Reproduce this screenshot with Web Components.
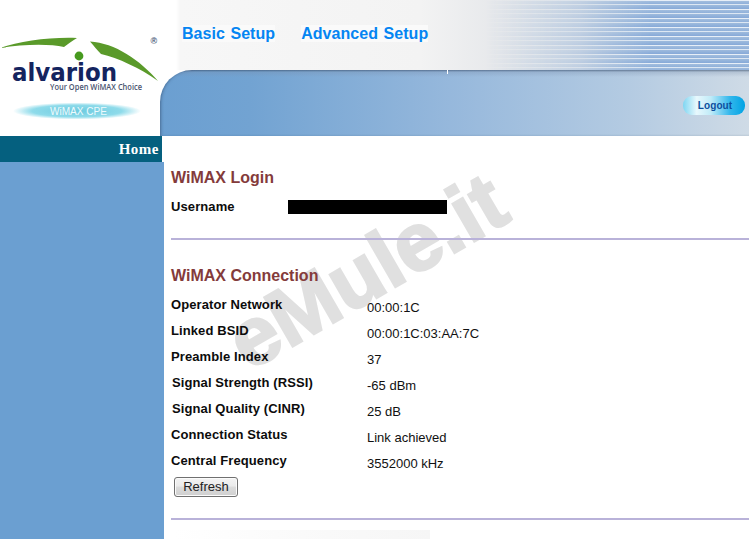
<!DOCTYPE html>
<html lang="en">
<head>
<meta charset="utf-8">
<title>WiMAX CPE</title>
<style>
html,body{margin:0;padding:0;background:#fff;height:539px;overflow:hidden}
body{font-family:"Liberation Sans",Arial,sans-serif}
</style>
</head>
<body>
<alv-page>
  <alv-header slot="header">
    <alv-logo slot="logo"></alv-logo>
    <alv-nav slot="nav">
      <a>Basic Setup</a>
      <a>Advanced Setup</a>
    </alv-nav>
    <alv-logout slot="action">Logout</alv-logout>
  </alv-header>
  <alv-sidebar slot="side">Home</alv-sidebar>
  <alv-watermark slot="main">eMule.it</alv-watermark>
  <alv-section slot="main" heading="WiMAX Login" style="--head-top:32px;--body-h:50px;--body-top:11px">
    <alv-row label="Username" style="--value-left:117px;--value-shift:0px"><alv-redact></alv-redact></alv-row>
  </alv-section>
  <alv-section slot="main" heading="WiMAX Connection" style="--head-top:26px;--body-h:0;--body-top:11px">
    <alv-row label="Operator Network">00:00:1C</alv-row>
    <alv-row label="Linked BSID">00:00:1C:03:AA:7C</alv-row>
    <alv-row label="Preamble Index">37</alv-row>
    <alv-row label="Signal Strength (RSSI)" style="--label-x:1px">-65 dBm</alv-row>
    <alv-row label="Signal Quality (CINR)" style="--label-x:1px">25 dB</alv-row>
    <alv-row label="Connection Status">Link achieved</alv-row>
    <alv-row label="Central Frequency">3552000 kHz</alv-row>
    <alv-refresh>Refresh</alv-refresh>
  </alv-section>
  <alv-faint slot="main"></alv-faint>
</alv-page>
<script>
function def(name, html, setup){
  customElements.define(name, class extends HTMLElement{
    constructor(){
      super();
      const r=this.attachShadow({mode:'open'});
      r.innerHTML=html;
    }
    connectedCallback(){ if(setup) setup(this); }
  });
}
def('alv-page',`<style>
:host{display:grid;grid-template-columns:164px 1fr;grid-template-rows:136px 403px;width:749px;height:539px;overflow:hidden;position:relative}
.h{grid-column:1/3;display:block}
.m{display:block;position:relative;min-width:0}
</style>
<slot class="h" name="header"></slot>
<slot name="side"></slot>
<div class="m"><slot name="main"></slot></div>`);

def('alv-header',`<style>
:host{display:flex;height:136px;grid-column:1/3;background:#fff}
.logo{flex:0 0 160px;display:block}
.right{flex:1;display:flex;flex-direction:column;min-width:0}
.top{height:70px;position:relative;background:linear-gradient(90deg,#fff 0,#fff 16px,#f7f7f7 20px,#f3f3f3 260px,#e6e8eb 340px,#ced8e3 470px,#aac2de 589px);}
.stripes{position:absolute;inset:0;background:repeating-linear-gradient(180deg,#e6eef7 0,#e6eef7 1px,#a3bede 1px,#8fb0da 4px,#dce7f3 4px,#dce7f3 5px,#9ebbdd 5px,#86a9d8 9px);
 -webkit-mask-image:linear-gradient(90deg,transparent 325px,rgba(0,0,0,.35) 420px,#000 490px);mask-image:linear-gradient(90deg,transparent 325px,rgba(0,0,0,.35) 420px,#000 490px)}
.navwrap{position:relative;display:block;height:70px}
.band{height:66px;position:relative;display:flex;justify-content:flex-end;align-items:flex-start;border-top-left-radius:32px;
 background:linear-gradient(180deg,rgba(60,80,110,.6) 0,rgba(120,140,170,.3) 2px,rgba(255,255,255,0) 7px),linear-gradient(90deg,#6b9fd1 0,#72a3d2 90px,#96b8dc 290px,#b4cbe2 470px,#cfdbe6 589px);
 box-shadow:inset 2px 0 3px -1px rgba(40,60,90,.5)}
.band::before{content:"";position:absolute;left:287px;top:0;width:1px;height:4px;background:#fff}
.action{display:block;margin:26px 4px 0 0}
</style>
<div class="logo"><slot name="logo"></slot></div>
<div class="right">
  <div class="top"><div class="stripes"></div><div class="navwrap"><slot name="nav"></slot></div></div>
  <div class="band"><div class="action"><slot name="action"></slot></div></div>
</div>`);

def('alv-logo',`<style>
:host{display:block;width:160px;height:136px}
svg{display:block}
</style>
<svg width="160" height="136" viewBox="0 0 160 136" role="img">
<defs>
<radialGradient id="p" cx=".5" cy=".5" r=".5"><stop offset="0" stop-color="#6ccbe0"/><stop offset=".7" stop-color="#8fdbea"/><stop offset="1" stop-color="#fff"/></radialGradient>
</defs>
<path d="M0 48C20 41 50 37 77 38C72 41 68 44 64 47C50 44 25 44 0 48Z" fill="#5a9a2a"/>
<path d="M90 41.5C115 43 140 60 158 81C140 68 118 58 101 54C97 50 94 46 90 41.5Z" fill="#5a9a2a"/>
<circle cx="79" cy="56" r="4.4" fill="#479a1f"/>
<text x="150.500" y="44" font-family="Liberation Sans" font-size="9" font-weight="700" fill="#4a5a78">®</text>
<text x="12" y="80.500" font-family="DejaVu Sans" font-weight="700" font-size="25" fill="#14245f" textLength="105" lengthAdjust="spacingAndGlyphs">alvarion</text>
<text x="50" y="90" font-family="Open Sans" font-weight="600" font-size="8" fill="#4a5470" textLength="92" lengthAdjust="spacingAndGlyphs">Your Open WiMAX Choice</text>
<ellipse cx="77" cy="111" rx="64" ry="8.500" fill="url(#p)"/>
<text x="50" y="115" font-family="Liberation Sans" font-size="11" fill="#eefafd" textLength="57" lengthAdjust="spacingAndGlyphs">WiMAX CPE</text>
</svg>`);

def('alv-nav',`<style>
:host{display:flex;gap:26px;padding:25px 0 0 22px;font:700 16px/17px "Liberation Sans",Arial,sans-serif;color:#0585f2;letter-spacing:.05px;word-spacing:1px}
::slotted(a){background:#fafafa;white-space:nowrap}
</style><slot></slot>`);

def('alv-logout',`<style>
:host{display:flex;align-items:center;justify-content:center;width:62px;height:19px;border-radius:9px;font:700 10px/19px "Liberation Sans",Arial,sans-serif;color:#0d4f9e;letter-spacing:.1px;text-indent:2px;
background:linear-gradient(90deg,#7fd6f2 0,#e8f8fd 22%,#c0ebf8 45%,#35b8ec 75%,#00a3e4 100%)}
</style><slot></slot>`);

def('alv-sidebar',`<style>
:host{display:block;background:#6b9fd1;height:403px}
.h{display:block;height:26px;width:162px;box-sizing:border-box;background:#05607f;color:#fff;text-align:right;padding-right:3px;font:700 15px/26px "Liberation Serif","Times New Roman",serif;letter-spacing:.5px}
.w{background:#fff;height:26px}
</style><div class="w"><div class="h"><slot></slot></div></div>`);

def('alv-watermark',`<style>
:host{position:absolute;left:91px;top:165px;font:700 82px/82px "Liberation Sans",Arial,sans-serif;color:#e0e0e0;-webkit-text-stroke:2.5px #e0e0e0;white-space:nowrap;transform:rotate(-30deg);transform-origin:0 100%;z-index:0;pointer-events:none}
</style><slot></slot>`);

def('alv-section',`<style>
:host{display:block;position:relative;z-index:1;padding:0 0 0 7px}
h2{margin:0;padding-top:var(--head-top,24px);font:700 16px/20px "Liberation Sans",Arial,sans-serif;color:#843b3b}
.b{min-height:var(--body-h,0);padding-top:var(--body-top,10px);box-sizing:border-box}
hr{display:block;margin:0;border:0;height:2px;background:#b9b2d9}
</style>
<h2></h2><div class="b"><slot></slot></div><hr>`,
el=>{el.shadowRoot.querySelector('h2').textContent=el.getAttribute('heading');});

def('alv-row',`<style>
:host{display:flex;height:26px;font:13px/16px "Liberation Sans",Arial,sans-serif;color:#111}
.l{flex:0 0 196px;box-sizing:border-box;padding-left:var(--label-x,0);font-weight:700;letter-spacing:.1px;color:#0c0c0c;white-space:nowrap}
.v{padding-top:var(--value-shift,3px);margin-left:var(--value-left,0);white-space:nowrap;flex:1}
:host([label="Username"]) .l{flex-basis:0;width:0}
</style><div class="l"></div><div class="v"><slot></slot></div>`,
el=>{el.shadowRoot.querySelector('.l').textContent=el.getAttribute('label');});

def('alv-redact',`<style>:host{display:block;width:159px;height:14px;background:#000;margin-top:1px}</style>`);

def('alv-refresh',`<style>
:host{display:flex;align-items:center;justify-content:center;box-sizing:border-box;width:64px;height:20px;margin:-2px 0 21px 3px;border:1px solid #707070;border-radius:3px;font:13px/16px "Liberation Sans",Arial,sans-serif;color:#222;
background:linear-gradient(180deg,#f3f3f3 0,#ebebeb 45%,#dcdcdc 50%,#cfcfcf 100%);box-shadow:inset 0 0 0 1px #fbfbfb}
</style><slot></slot>`);

def('alv-faint',`<style>
:host{display:block;width:255px;height:9px;margin:10px 0 0 11px;background:linear-gradient(90deg,#fff,#f9f9f9 60%,#f6f6f6)}
</style>`);
</script>
</body>
</html>
